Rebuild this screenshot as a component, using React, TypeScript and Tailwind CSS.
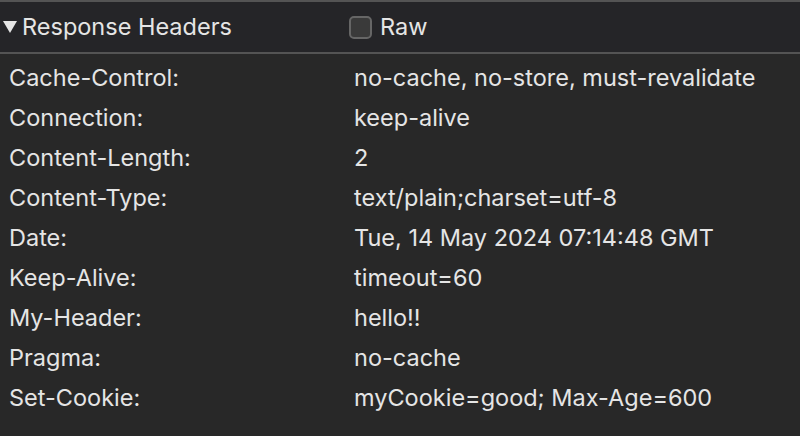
const HEADERS: [string, string][] = [
  ["Cache-Control:", "no-cache, no-store, must-revalidate"],
  ["Connection:", "keep-alive"],
  ["Content-Length:", "2"],
  ["Content-Type:", "text/plain;charset=utf-8"],
  ["Date:", "Tue, 14 May 2024 07:14:48 GMT"],
  ["Keep-Alive:", "timeout=60"],
  ["My-Header:", "hello!!"],
  ["Pragma:", "no-cache"],
  ["Set-Cookie:", "myCookie=good; Max-Age=600"],
];

export default function App() {
  return (
    <div
      className="w-[800px] h-[436px] overflow-hidden bg-[#282828] text-[#e5e5e5] text-[23.5px] leading-none"
      style={{ fontFamily: "Inter, 'Noto Sans', sans-serif" }}
    >
      {/* Header bar */}
      <div className="h-[54px] border-t-2 border-b-2 border-[#545454] bg-[#252528] flex items-center">
        <div className="w-[346px] flex items-center pl-[3px]">
          <svg width="14" height="12" viewBox="0 0 14 12" className="mr-[5px]">
            <path d="M0 0 L14 0 L7 12 Z" fill="#e5e5e5" />
          </svg>
          <span>Response Headers</span>
        </div>
        <div className="flex items-center gap-[8px] ml-[3px]">
          <div className="w-[23px] h-[23px] rounded-[5px] border-2 border-[#666] bg-[#3a3a3a]" />
          <span>Raw</span>
        </div>
      </div>

      {/* Rows */}
      <div className="pt-[4px]">
        {HEADERS.map(([k, v]) => (
          <div key={k} className="h-[40px] flex items-center">
            <div className="w-[354px] pl-[9px]">{k}</div>
            <div>{v}</div>
          </div>
        ))}
      </div>
    </div>
  );
}
